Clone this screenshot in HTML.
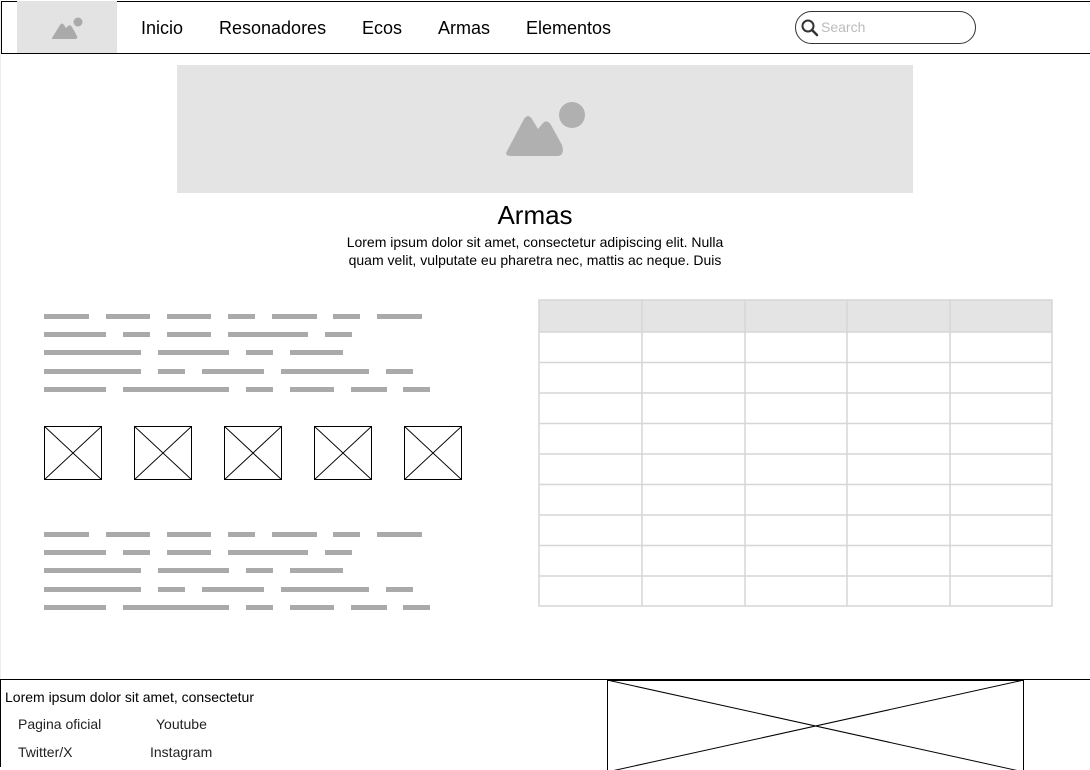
<!DOCTYPE html>
<html><head><meta charset="utf-8"><style>
*{margin:0;padding:0;box-sizing:border-box}
body{width:1090px;height:767px;position:relative;overflow:hidden;background:#fff;font-family:"Liberation Sans",Arial,sans-serif;color:#000}
.a{position:absolute}
.b{position:absolute;height:5px;background:#aaa}
.nav{font-size:18px;top:18px}
.x{position:absolute;top:426px;width:58px;height:54px}
</style></head><body>
<div class="a" style="left:0;top:0;width:1px;height:767px;background:#eee"></div>
<div class="a" style="left:1px;top:1px;width:1089px;height:53px;border:1px solid #000;border-right:none"></div>
<div class="a" style="left:17px;top:1px;width:100px;height:52px;background:#e3e3e3"></div>
<svg class="a" style="left:50px;top:15px" width="35" height="25" viewBox="0 0 35 25"><path d="M2 23 L10 10 Q12 7 14 10 L16 13 L18 11 Q20 9 22 12 L27 21 Q28 24 25 24 L4 24 Q1 24 2 23Z" fill="#aaa"/><circle cx="28" cy="7" r="4.5" fill="#aaa"/></svg>
<div class="a nav" style="left:141px">Inicio</div>
<div class="a nav" style="left:219px">Resonadores</div>
<div class="a nav" style="left:362px">Ecos</div>
<div class="a nav" style="left:438px">Armas</div>
<div class="a nav" style="left:526px">Elementos</div>
<div class="a" style="left:795px;top:11px;width:181px;height:33px;border:1px solid #333;border-radius:17px"></div>
<svg class="a" style="left:800px;top:18px" width="20" height="20" viewBox="0 0 20 20"><circle cx="8" cy="8" r="5.5" fill="none" stroke="#333" stroke-width="2"/><path d="M12 12 L17 17" stroke="#333" stroke-width="2.5" stroke-linecap="round"/></svg>
<div class="a" style="left:821px;top:19px;font-size:14px;color:#bbb">Search</div>

<div class="a" style="left:177px;top:65px;width:736px;height:128px;background:#e4e4e4"></div>
<svg class="a" style="left:505px;top:101px" width="82" height="57" viewBox="0 0 82 57"><path d="M2 50 L19 18 Q23 12 27 18 L33 28 L38 22 Q42 18 46 24 L57 44 Q60 54 53 55 L6 55 Q-1 55 2 50Z" fill="#b0b0b0"/><circle cx="67" cy="14" r="13" fill="#b0b0b0"/></svg>
<div class="a" style="left:0;width:1070px;top:200px;text-align:center;font-size:26px">Armas</div>
<div class="a" style="left:335px;width:400px;top:233px;text-align:center;font-size:14px;line-height:18px">Lorem ipsum dolor sit amet, consectetur adipiscing elit. Nulla quam velit, vulputate eu pharetra nec, mattis ac neque. Duis</div>

<div class="b" style="left:44px;top:314px;width:45px"></div><div class="b" style="left:106px;top:314px;width:44px"></div><div class="b" style="left:167px;top:314px;width:44px"></div><div class="b" style="left:228px;top:314px;width:27px"></div><div class="b" style="left:272px;top:314px;width:45px"></div><div class="b" style="left:333px;top:314px;width:27px"></div><div class="b" style="left:377px;top:314px;width:45px"></div>
<div class="b" style="left:44px;top:332px;width:62px"></div><div class="b" style="left:123px;top:332px;width:27px"></div><div class="b" style="left:167px;top:332px;width:44px"></div><div class="b" style="left:228px;top:332px;width:80px"></div><div class="b" style="left:325px;top:332px;width:27px"></div>
<div class="b" style="left:44px;top:350px;width:97px"></div><div class="b" style="left:158px;top:350px;width:71px"></div><div class="b" style="left:246px;top:350px;width:27px"></div><div class="b" style="left:290px;top:350px;width:53px"></div>
<div class="b" style="left:44px;top:369px;width:97px"></div><div class="b" style="left:158px;top:369px;width:27px"></div><div class="b" style="left:202px;top:369px;width:62px"></div><div class="b" style="left:281px;top:369px;width:88px"></div><div class="b" style="left:386px;top:369px;width:27px"></div>
<div class="b" style="left:44px;top:387px;width:62px"></div><div class="b" style="left:123px;top:387px;width:106px"></div><div class="b" style="left:246px;top:387px;width:27px"></div><div class="b" style="left:290px;top:387px;width:44px"></div><div class="b" style="left:351px;top:387px;width:36px"></div><div class="b" style="left:403px;top:387px;width:27px"></div>

<div class="b" style="left:44px;top:532px;width:45px"></div><div class="b" style="left:106px;top:532px;width:44px"></div><div class="b" style="left:167px;top:532px;width:44px"></div><div class="b" style="left:228px;top:532px;width:27px"></div><div class="b" style="left:272px;top:532px;width:45px"></div><div class="b" style="left:333px;top:532px;width:27px"></div><div class="b" style="left:377px;top:532px;width:45px"></div>
<div class="b" style="left:44px;top:550px;width:62px"></div><div class="b" style="left:123px;top:550px;width:27px"></div><div class="b" style="left:167px;top:550px;width:44px"></div><div class="b" style="left:228px;top:550px;width:80px"></div><div class="b" style="left:325px;top:550px;width:27px"></div>
<div class="b" style="left:44px;top:568px;width:97px"></div><div class="b" style="left:158px;top:568px;width:71px"></div><div class="b" style="left:246px;top:568px;width:27px"></div><div class="b" style="left:290px;top:568px;width:53px"></div>
<div class="b" style="left:44px;top:587px;width:97px"></div><div class="b" style="left:158px;top:587px;width:27px"></div><div class="b" style="left:202px;top:587px;width:62px"></div><div class="b" style="left:281px;top:587px;width:88px"></div><div class="b" style="left:386px;top:587px;width:27px"></div>
<div class="b" style="left:44px;top:605px;width:62px"></div><div class="b" style="left:123px;top:605px;width:106px"></div><div class="b" style="left:246px;top:605px;width:27px"></div><div class="b" style="left:290px;top:605px;width:44px"></div><div class="b" style="left:351px;top:605px;width:36px"></div><div class="b" style="left:403px;top:605px;width:27px"></div>

<svg class="x" style="left:44px" viewBox="0 0 58 54"><rect x=".5" y=".5" width="57" height="53" fill="none" stroke="#000"/><path d="M0 0L58 54M58 0L0 54" stroke="#000"/></svg>
<svg class="x" style="left:134px" viewBox="0 0 58 54"><rect x=".5" y=".5" width="57" height="53" fill="none" stroke="#000"/><path d="M0 0L58 54M58 0L0 54" stroke="#000"/></svg>
<svg class="x" style="left:224px" viewBox="0 0 58 54"><rect x=".5" y=".5" width="57" height="53" fill="none" stroke="#000"/><path d="M0 0L58 54M58 0L0 54" stroke="#000"/></svg>
<svg class="x" style="left:314px" viewBox="0 0 58 54"><rect x=".5" y=".5" width="57" height="53" fill="none" stroke="#000"/><path d="M0 0L58 54M58 0L0 54" stroke="#000"/></svg>
<svg class="x" style="left:404px" viewBox="0 0 58 54"><rect x=".5" y=".5" width="57" height="53" fill="none" stroke="#000"/><path d="M0 0L58 54M58 0L0 54" stroke="#000"/></svg>

<svg class="a" style="left:538px;top:299px" width="516" height="309">
<rect x="1" y="1" width="513" height="32" fill="#e4e4e4"/>
<g stroke="#d6d6d6" stroke-width="1.5" fill="none">
<rect x="1" y="1" width="513" height="306"/>
<path d="M1 33H514M1 63.5H514M1 94H514M1 124.5H514M1 155H514M1 185.5H514M1 216H514M1 246.5H514M1 277H514"/>
<path d="M104 1V307M207 1V307M309 1V307M412 1V307"/>
</g></svg>

<div class="a" style="left:0;top:679px;width:1090px;height:1px;background:#000"></div>
<div class="a" style="left:0;top:679px;width:1px;height:88px;background:#000"></div>
<div class="a" style="left:5px;top:689px;font-size:14px">Lorem ipsum dolor sit amet, consectetur</div>
<div class="a" style="left:18px;top:716px;font-size:14px;color:#222">Pagina oficial</div>
<div class="a" style="left:156px;top:716px;font-size:14px;color:#222">Youtube</div>
<div class="a" style="left:18px;top:744px;font-size:14px;color:#222">Twitter/X</div>
<div class="a" style="left:150px;top:744px;font-size:14px;color:#222">Instagram</div>
<svg class="a" style="left:607px;top:680px" width="418" height="90"><rect x=".5" y=".5" width="416" height="92" fill="none" stroke="#000"/><path d="M0 0L417 92M417 0L0 92" stroke="#000"/></svg>
</body></html>
